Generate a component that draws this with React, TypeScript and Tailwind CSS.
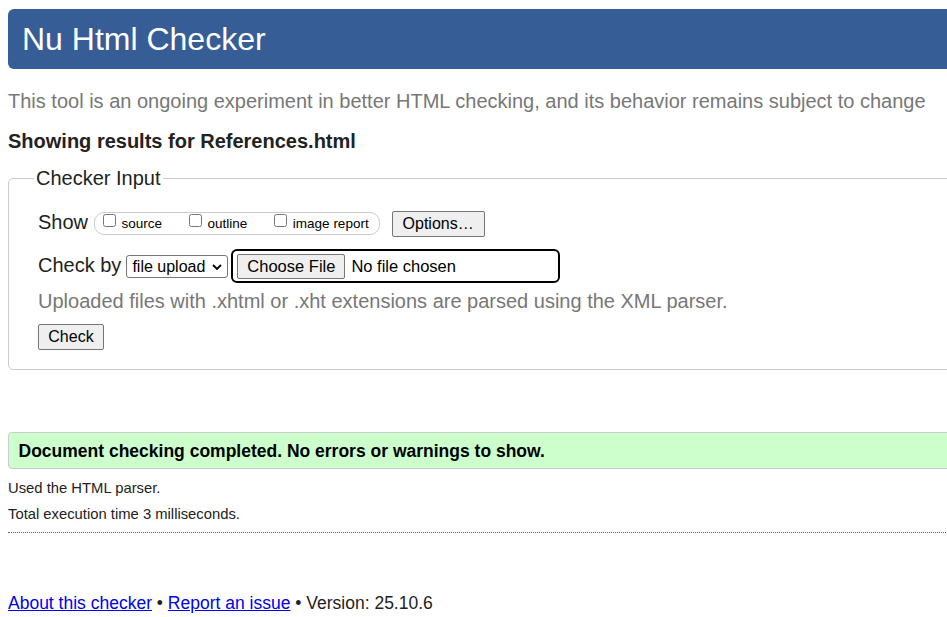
import React from "react";

const font = "font-['Liberation_Sans',Arial,sans-serif]";

function ShowOption({ label }: { label: string }) {
  return (
    <label className="flex items-start">
      <input type="checkbox" className="mt-[1px] ml-[4px] mr-[5.5px] h-[13px] w-[13px]" />
      <span className="mt-[3px] text-[13.5px] leading-[16px] text-black">{label}</span>
    </label>
  );
}

function GrayButton({ children, className = "" }: { children: React.ReactNode; className?: string }) {
  return (
    <button
      type="button"
      className={`flex h-[26px] items-center justify-center rounded-[2px] border border-[#767676] bg-[#efefef] text-[16px] leading-[18px] text-black ${className}`}
    >
      {children}
    </button>
  );
}

export default function App() {
  return (
    <div className={`h-screen w-full overflow-hidden bg-white ${font} text-[#222]`}>
      <div className="w-[1000px] pl-2">
        {/* Title bar */}
        <h1 className="mt-[9px] flex h-[60px] items-center rounded-[6px] bg-[#365d95] pl-[14px] text-[32px] leading-none text-white">
          Nu Html Checker
        </h1>

        <p className="mt-[20px] text-[20px] leading-[24px] text-[#777]">
          This tool is an ongoing experiment in better HTML checking, and its behavior remains subject to change
        </p>

        <h2 className="mt-[16px] text-[20px] font-bold leading-[24px] text-[#222]">
          Showing results for References.html
        </h2>

        {/* Checker input */}
        <fieldset className="mt-[13px] rounded-[5px] border border-[#ccc] pb-[19px]">
          <legend className="ml-[25px] px-[2px] text-[20px] leading-[24px] text-[#222]">Checker Input</legend>

          <div className="pl-[29px] pt-[20px]">
            <div className="flex items-start">
              <span className="text-[20px] leading-[24px]">Show</span>
              <div className="ml-[6px] mt-[2px] flex h-[23px] items-start gap-[23px] rounded-[10px] border border-[#ccc] pl-[4px] pr-[10px]">
                <ShowOption label="source" />
                <ShowOption label="outline" />
                <ShowOption label="image report" />
              </div>
              <GrayButton className="ml-[12px] mt-[1px] w-[93px]">Options…</GrayButton>
            </div>

            <div className="mt-[12px] flex items-start">
              <span className="mt-[4px] text-[20px] leading-[24px]">Check by</span>
              <div className="ml-[5px] mt-[6px] flex h-[23px] w-[102px] items-center rounded-[3px] border border-[#767676] bg-white">
                <select className="h-full flex-1 appearance-none bg-transparent pl-[5px] text-[16px] leading-[18px] text-black outline-none">
                  <option>file upload</option>
                </select>
                <svg width="10" height="6" viewBox="0 0 10 6" className="mr-[5px]">
                  <path d="M1 1l4 4 4-4" fill="none" stroke="#000" strokeWidth="1.8" />
                </svg>
              </div>
              <div className="ml-[2.5px] flex h-[34px] w-[329px] items-center rounded-[6px] border-2 border-black pl-[4.5px]">
                <button
                  type="button"
                  className="flex h-[25px] w-[108px] items-center justify-center rounded-[2px] border border-[#767676] bg-[#efefef] text-[16.5px] leading-[18px] text-black"
                >
                  Choose File
                </button>
                <span className="ml-[6px] text-[16.5px] leading-[18px] text-black">No file chosen</span>
              </div>
            </div>

            <p className="mt-[6px] text-[20px] leading-[24px] text-[#777]">
              Uploaded files with .xhtml or .xht extensions are parsed using the XML parser.
            </p>

            <GrayButton className="mt-[11px] w-[66px]">Check</GrayButton>
          </div>
        </fieldset>

        {/* Result */}
        <div className="mt-[62px] flex h-[37px] items-center rounded-l-[4px] border border-[#ccc] bg-[#ccffcc] pl-[9.5px]">
          <p className="text-[17.5px] font-bold leading-[22px] text-black">
            Document checking completed. No errors or warnings to show.
          </p>
        </div>

        <p className="mt-[9px] text-[14.8px] leading-[20px] text-[#222]">Used the HTML parser.</p>
        <p className="mt-[6px] text-[14.8px] leading-[20px] text-[#222]">Total execution time 3 milliseconds.</p>

        <div className="mt-[8px] border-t border-dotted border-[#666]" />

        <p className="mt-[59px] text-[17.5px] leading-[22px] text-[#222]">
          <a href="#" className="text-[#0000ee] underline">
            About this checker
          </a>{" "}
          •{" "}
          <a href="#" className="text-[#0000ee] underline">
            Report an issue
          </a>{" "}
          • Version: 25.10.6
        </p>
      </div>
    </div>
  );
}
